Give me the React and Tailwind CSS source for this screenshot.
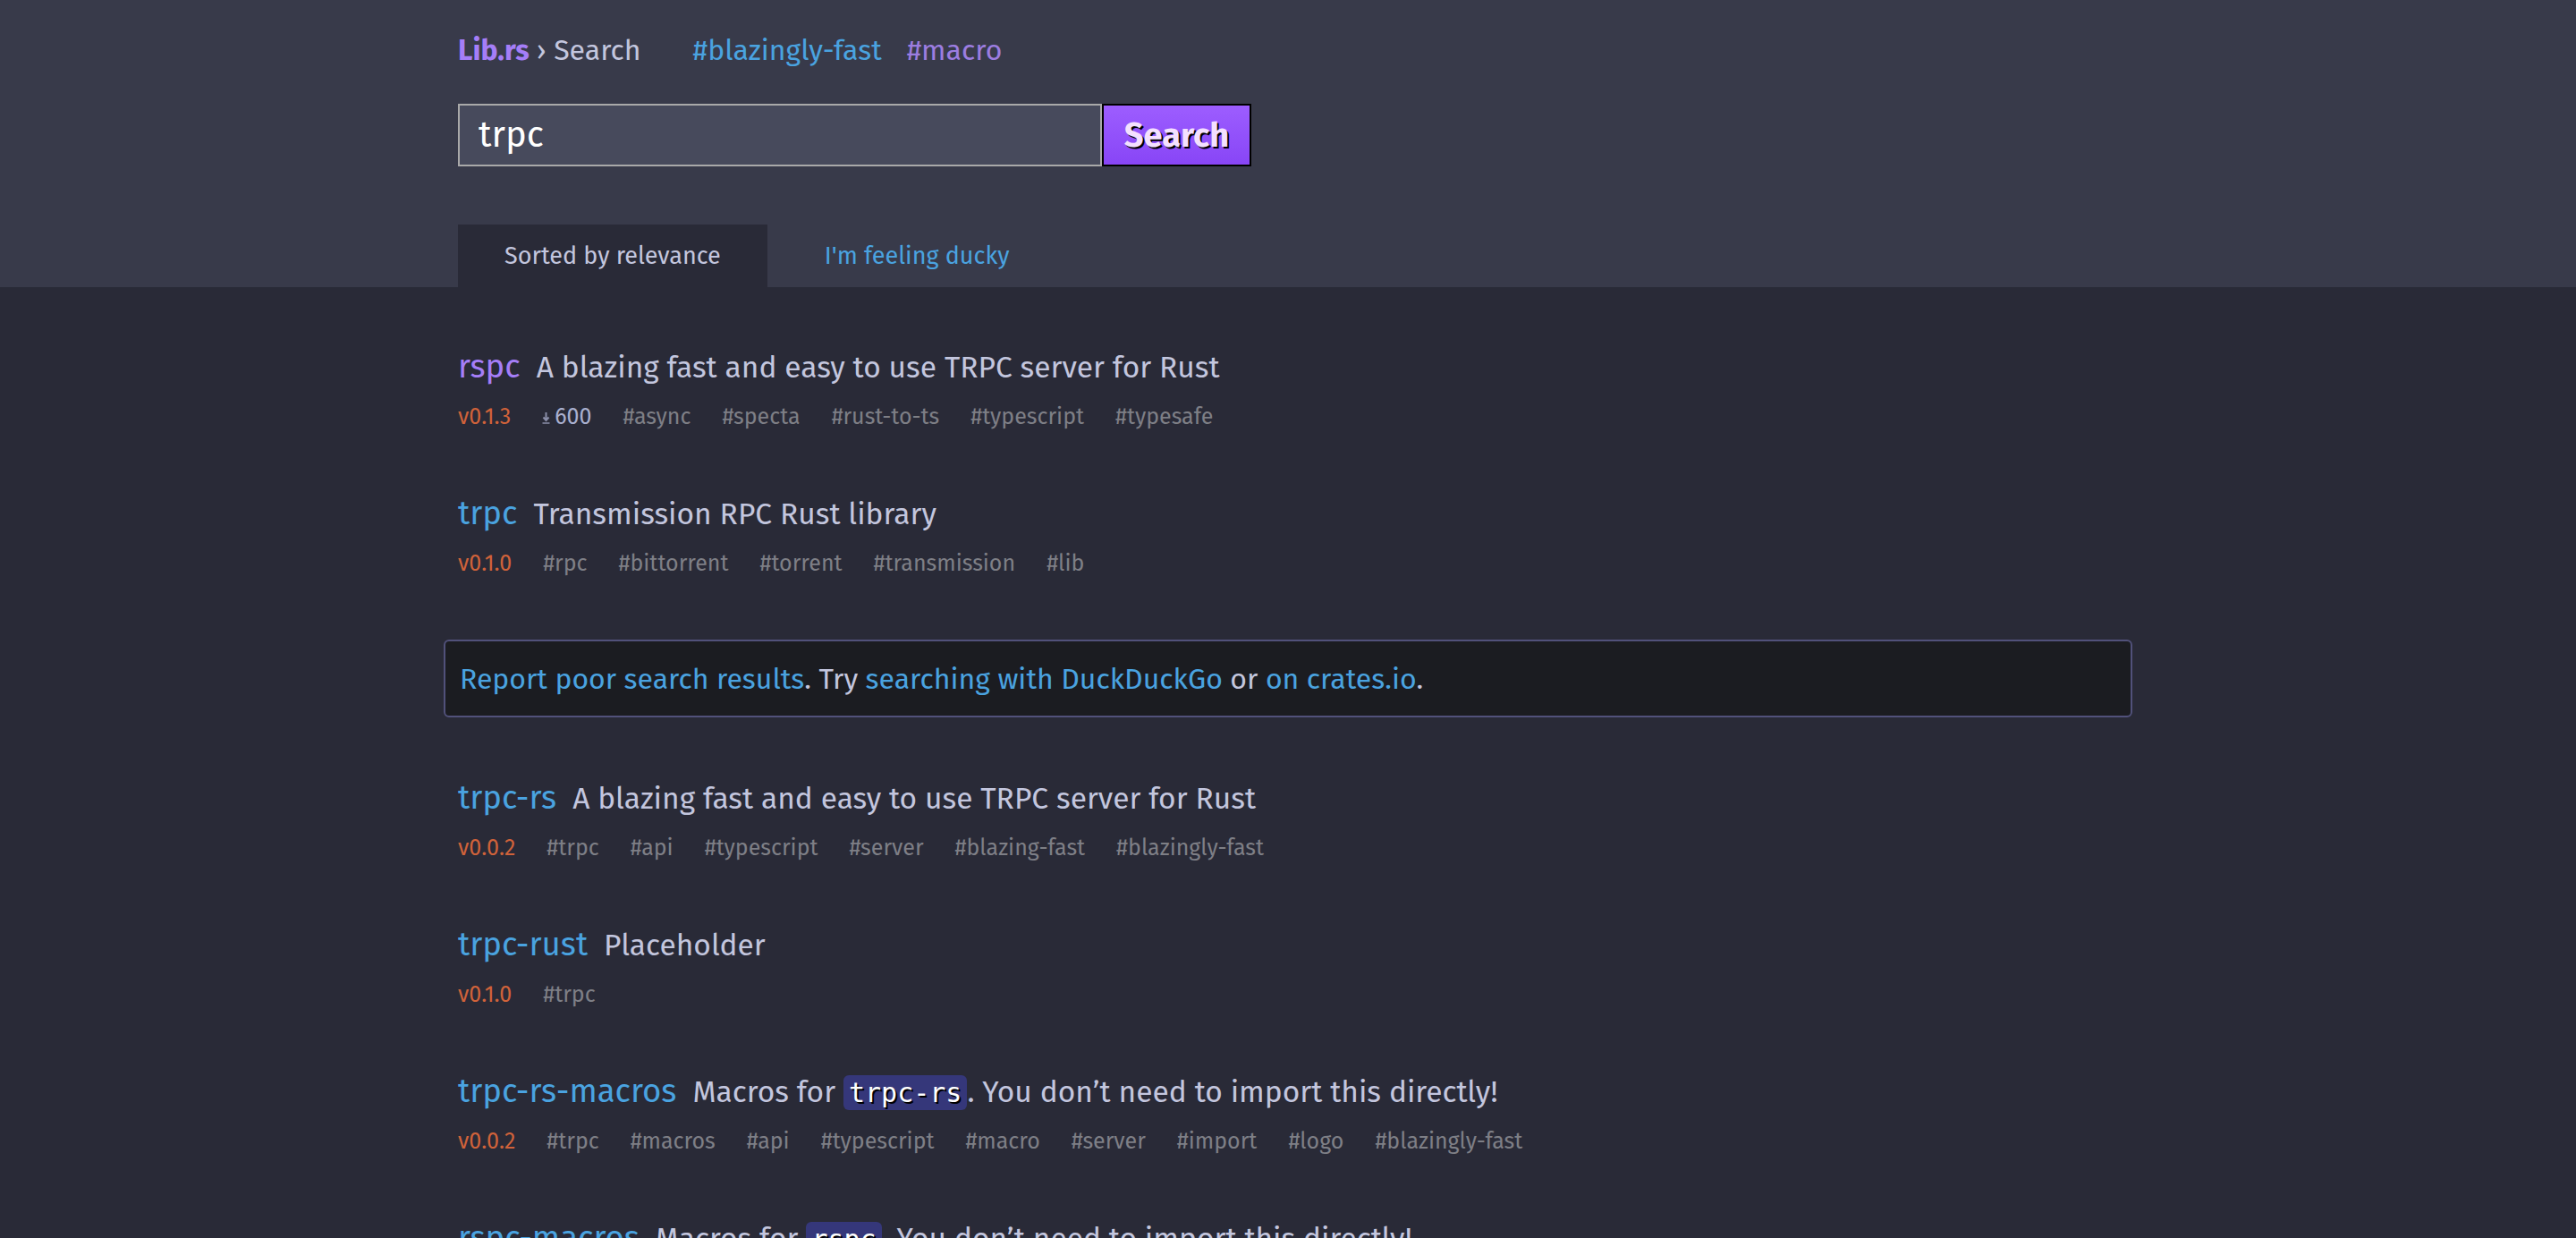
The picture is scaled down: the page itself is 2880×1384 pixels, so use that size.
import { Fragment } from "react";

const FONT = "font-['Fira_Sans','Open_Sans',sans-serif]";

const results = [
  {
    name: "rspc",
    visited: true,
    desc: "A blazing fast and easy to use TRPC server for Rust",
    version: "v0.1.3",
    downloads: "600",
    tags: ["async", "specta", "rust-to-ts", "typescript", "typesafe"],
  },
  {
    name: "trpc",
    desc: "Transmission RPC Rust library",
    version: "v0.1.0",
    tags: ["rpc", "bittorrent", "torrent", "transmission", "lib"],
  },
  { notice: true },
  {
    name: "trpc-rs",
    desc: "A blazing fast and easy to use TRPC server for Rust",
    version: "v0.0.2",
    tags: ["trpc", "api", "typescript", "server", "blazing-fast", "blazingly-fast"],
  },
  {
    name: "trpc-rust",
    desc: "Placeholder",
    version: "v0.1.0",
    tags: ["trpc"],
  },
  {
    name: "trpc-rs-macros",
    code: "trpc-rs",
    version: "v0.0.2",
    tags: ["trpc", "macros", "api", "typescript", "macro", "server", "import", "logo", "blazingly-fast"],
  },
  {
    name: "rspc-macros",
    code: "rspc",
    version: "v0.0.2",
    tags: ["rspc", "macros", "typescript"],
  },
];

function DownloadIcon() {
  return (
    <svg width="9" height="14" viewBox="0 0 9 14" className="mr-[5px] translate-y-[1px]">
      <path d="M4.5 1v8M1.5 6.5l3 3.5 3-3.5" stroke="#8a8ea8" strokeWidth="2" fill="none" />
      <path d="M0.5 13h8" stroke="#8a8ea8" strokeWidth="1.5" />
    </svg>
  );
}

function Result({ item }) {
  return (
    <li className="px-4">
      <div className="flex h-[46px] items-baseline gap-[18px] leading-[46px]">
        <a className={`text-[36.5px] ${item.visited ? "text-[#a57ef8]" : "text-[#4aa3e0]"}`}>{item.name}</a>
        <span className="text-[33.5px] text-[#c3c6de]">
          {item.code ? (
            <>
              Macros for{" "}
              <code className="rounded-[6px] bg-[#35377a] px-[6px] py-[2px] font-['DejaVu_Sans_Mono',monospace] text-[30px] text-white [text-shadow:2px_2px_0_#000]">
                {item.code}
              </code>
              . You don’t need to import this directly!
            </>
          ) : (
            item.desc
          )}
        </span>
      </div>
      <div className="mt-[15px] flex h-[36px] items-center gap-[35px] text-[25px] leading-[36px]">
        <span className="text-[#d0623a]">{item.version}</span>
        {item.downloads && (
          <span className="flex items-center text-[#a9b0cf]">
            <DownloadIcon />
            {item.downloads}
          </span>
        )}
        {item.tags.map((t) => (
          <span key={t} className="text-[#7e7f86]">
            #{t}
          </span>
        ))}
      </div>
    </li>
  );
}

export default function App() {
  return (
    <div className={`h-screen overflow-hidden bg-[#292a37] ${FONT}`}>
      <header className="bg-[#383a4a]">
        <div className="mx-auto w-[1888px] px-4 pt-[36px]">
          <div className="flex items-baseline text-[32px] leading-[40px]">
            <a className="font-bold text-[#a57ef8]">Lib.rs</a>
            <span className="ml-[8px] text-[#c3c6de]">› Search</span>
            <a className="ml-[58px] text-[#4aa3e0]">#blazingly-fast</a>
            <a className="ml-[28px] text-[#9c7de0]">#macro</a>
          </div>

          <form className="mt-[40px] flex h-[70px]" onSubmit={(e) => e.preventDefault()}>
            <input
              defaultValue="trpc"
              className="h-full w-[720px] border-2 border-[#a9a9a9] bg-[#474a5c] pl-[21px] text-[40px] text-white outline-none"
            />
            <button
              type="submit"
              className="h-full w-[167px] border-2 border-black bg-gradient-to-b from-[#9d5dff] to-[#8845f6] text-[38px] font-bold text-[#f4e0ff] [text-shadow:2px_2px_0_#000]"
            >
              Search
            </button>
          </form>

          <nav className="mt-[65px] flex h-[70px] items-center text-[27px]">
            <span className="flex h-full items-center bg-[#292a37] px-[52px] text-[#c3c6de]">Sorted by relevance</span>
            <a className="ml-[64px] text-[#4aa3e0]">I'm feeling ducky</a>
          </nav>
        </div>
      </header>

      <main className="mx-auto w-[1888px]">
        <ul className="flex flex-col gap-[67px] pt-[66px]">
          {results.map((item, i) =>
            item.notice ? (
              <li
                key={i}
                className="flex h-[87px] items-center rounded-[6px] border-2 border-[#51517a] bg-[#1b1c21] px-4 text-[32px] text-[#c3c6de]"
              >
                <a className="text-[#4aa3e0]">Report poor search results</a>. Try&nbsp;
                <a className="text-[#4aa3e0]">searching with DuckDuckGo</a>&nbsp;or&nbsp;
                <a className="text-[#4aa3e0]">on crates.io</a>.
              </li>
            ) : (
              <Fragment key={i}>
                <Result item={item} />
              </Fragment>
            )
          )}
        </ul>
      </main>
    </div>
  );
}
